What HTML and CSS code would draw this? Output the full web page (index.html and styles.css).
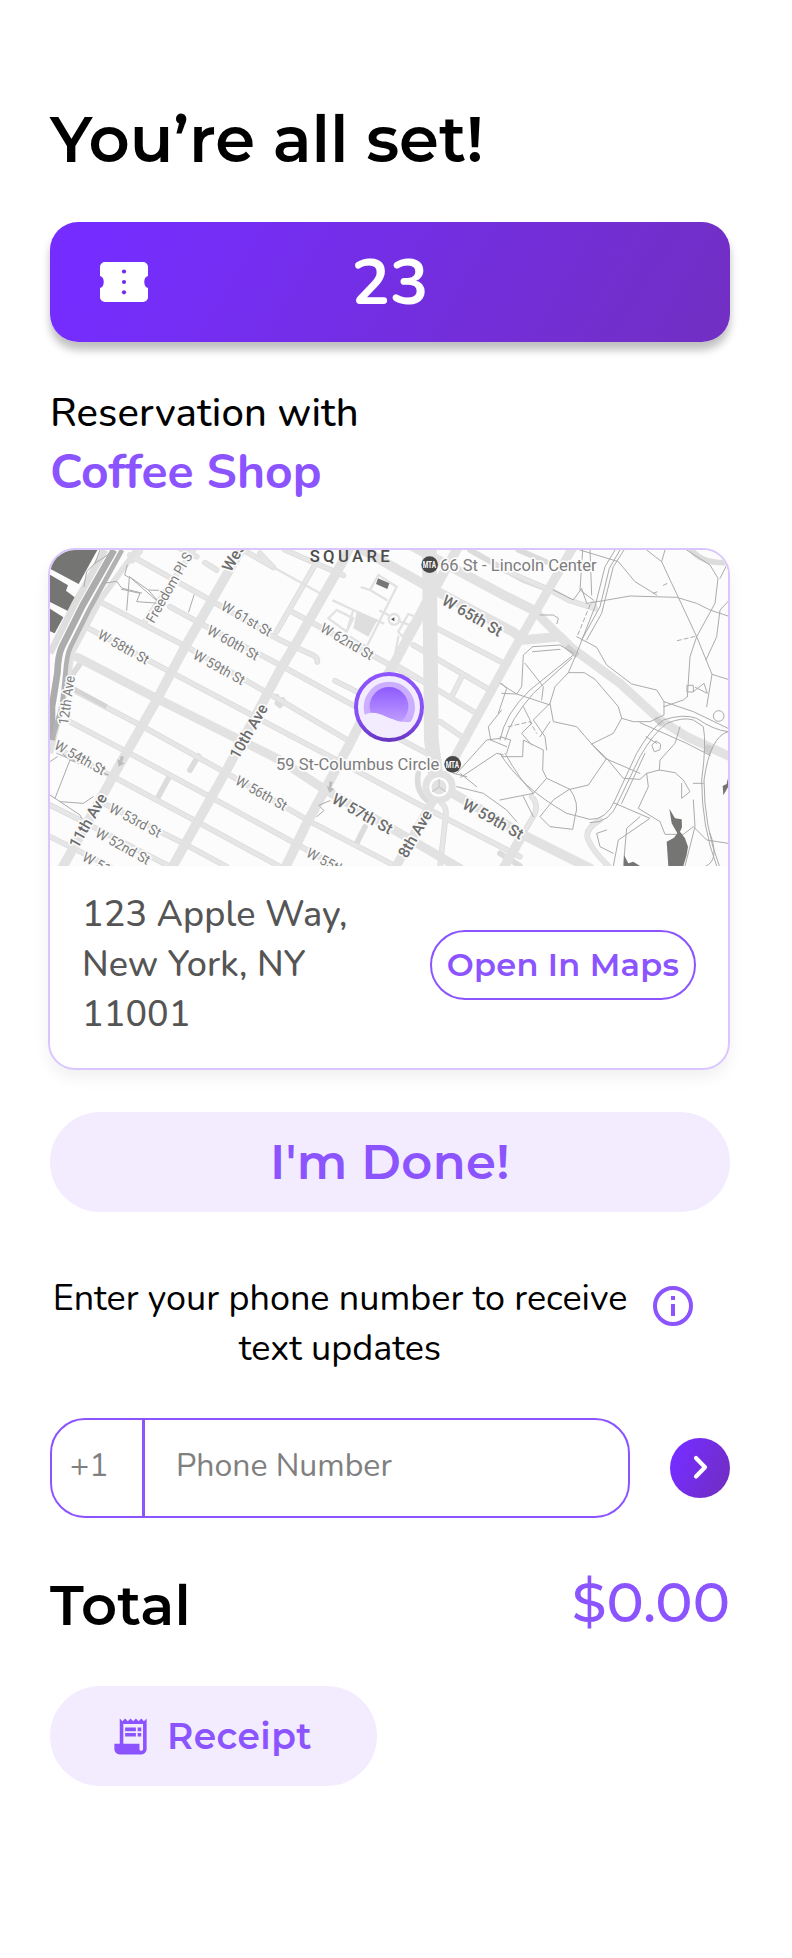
FILE: index.html
```html
<!DOCTYPE html>
<html lang="en">
<head>
<meta charset="utf-8">
<title>Reservation confirmed</title>
<link rel="stylesheet" href="styles.css">
</head>
<body>
<main class="page">
  <h1 class="title">You’re all set!</h1>

  <section class="ticket">
    <svg class="ticket-icon" viewBox="0 0 48 40" width="48" height="40">
      <path fill="#fff" d="M5 0H43a5 5 0 0 1 5 5V14a5 6.2 0 0 0 0 12V35a5 5 0 0 1-5 5H5a5 5 0 0 1-5-5V26a5 6.2 0 0 0 0-12V5a5 5 0 0 1 5-5z"/>
      <g fill="#742be9"><circle cx="24" cy="9.5" r="2.1"/><circle cx="24" cy="20" r="2.1"/><circle cx="24" cy="30.3" r="2.1"/></g>
    </svg>
    <span class="ticket-number">23</span>
  </section>

  <p class="with">Reservation with</p>
  <h2 class="shop">Coffee Shop</h2>

  <section class="place">
    <svg class="map" viewBox="30 30 2034 948" width="678" height="316">
      <defs>
        <linearGradient id="ring" x1="0" y1="0" x2="0" y2="1"><stop offset="0" stop-color="#8c55ff"/><stop offset=".65" stop-color="#8650f6"/><stop offset="1" stop-color="#6937c2"/></linearGradient>
        <linearGradient id="sun" x1="0" y1="0" x2="0" y2="1"><stop offset="0" stop-color="#8f5aff"/><stop offset="1" stop-color="#c4a4ff"/></linearGradient>
        <clipPath id="wave"><path d="M940 390H1160V545Q1130 548 1085 545C1045 538 1020 514 990 519Q980 520 972 526H940z"/></clipPath>
      </defs>
      <rect x="30" y="30" width="2034" height="948" fill="#fcfcfc"/>

      <!-- waterfront -->
      <g fill="#757574">
        <path d="M30 30H172L116 132L30 86z"/>
        <path d="M30 104L84 136L78 152L112 178L94 218L30 186z"/>
        <path d="M30 206L70 232L44 280L30 274z"/>
      </g>

      <!-- side streets -->
      <g class="street">
        <path d="M270 45L510 180L720 300L820 346q14 8 12 20M276 62L300 34M390 200L500 260L720 375L950 502M1080 598L1160 640M180 185L440 320L720 480L930 605"/>
        <path d="M145 265L390 395L720 570L890 660L1130 790L1440 950M110 455L310 560L560 700L820 850L1060 975M90 545L260 635L510 770L720 885L900 985"/>
        <path d="M40 620L220 710L480 850L720 980M190 790L430 910L560 980M30 795L120 840L400 985M30 890L130 940L210 980"/>
        <path d="M410 20L470 50M495 68L530 90M610 30L700 82M315 245L460 30M735 30L910 106M750 212L1060 380L1160 430M885 422L1000 480"/>
        <path d="M710 275L830 66M660 40L700 82M1190 265L1400 374M1120 315L1350 450M1080 382L1310 520M1200 545L1280 600M1265 410L1235 470M1170 690L1180 716"/>
        <path d="M450 690l25-42M355 770L390 706M100 400l24-34M710 470l10 26M950 910l25-50M712 490l16-10M1290 30L1450 120L1530 150"/>
        <path d="M1205 790q16 12 12 40L1200 980M1135 700q-10 50 25 80M1435 30L1520 66M1380 85L1530 150L1590 182L1665 206L1660 190M1380 940L1440 978"/>
        <path d="M1475 770q20 20 10 50L1450 880M1680 840q-50 30-35 60q15 35 60 78M1955 30q30 40 105 38"/>
      </g>
      <g class="street-fill">
        <path d="M270 45L510 180L720 300L820 346q14 8 12 20M276 62L300 34M390 200L500 260L720 375L950 502M1080 598L1160 640M180 185L440 320L720 480L930 605"/>
        <path d="M145 265L390 395L720 570L890 660L1130 790L1440 950M110 455L310 560L560 700L820 850L1060 975M90 545L260 635L510 770L720 885L900 985"/>
        <path d="M40 620L220 710L480 850L720 980M190 790L430 910L560 980M30 795L120 840L400 985M30 890L130 940L210 980"/>
        <path d="M410 20L470 50M495 68L530 90M610 30L700 82M315 245L460 30M735 30L910 106M750 212L1060 380L1160 430M885 422L1000 480"/>
        <path d="M710 275L830 66M660 40L700 82M1190 265L1400 374M1120 315L1350 450M1080 382L1310 520M1200 545L1280 600M1265 410L1235 470"/>
        <path d="M1205 790q16 12 12 40L1200 980M1475 770q20 20 10 50L1450 880M1680 840q-50 30-35 60q15 35 60 78M1380 85L1530 150L1590 182L1665 206L1660 190"/>
      </g>

      <!-- arts center plaza -->
      <g class="plaza">
        <path d="M1015 105L1070 140L980 320L930 290M1015 105L990 150L965 142M990 150L1040 180M880 182L940 210L1030 250M890 210L865 235L920 275L940 235zM940 210L920 275"/>
        <circle cx="1062" cy="238" r="16"/><path d="M1020 212L1045 225M1080 245l24 8M1105 222L1125 230L1088 290L1075 275zM1150 180L1065 345L1075 290M700 82L840 160"/>
      </g>
      <path d="M950 215L1012 240L985 290L940 265z" fill="#dedede"/>
      <path d="M1014 115L1048 130L1042 147L1008 132z" fill="#777"/>
      <path d="M1053 238l10-6v12z" fill="#555"/>

      <!-- main roads -->
      <g class="road">
        <path class="w26" d="M112 352L340 470L720 660L860 752L1080 880L1260 985"/>
        <path class="w28" d="M66 985L230 690L350 480L430 330L608 20"/>
        <path class="w28" d="M395 985L470 850L560 690L720 390L780 290L905 70L930 20"/>
        <path class="w28" d="M735 985L800 850L930 610L980 510L1060 375L1150 210L1210 100L1255 20"/>
        <path class="w26" d="M1065 985L1180 780M1235 670L1410 350L1490 210L1600 20"/>
        <path class="w28" d="M960 25L1150 132L1420 276L1450 300L1560 290L1590 320M1120 20L1400 170L1490 215"/>
        <path class="w44" d="M1168 25L1174 600L1190 720"/>
        <path class="w28" d="M1230 755L1410 860L1450 885L1650 985M1390 985L1450 880"/>
        <path class="w26" d="M1490 220L1590 320L1740 430L1860 540L1940 590L2070 650"/>
      </g>
      <circle cx="1197" cy="740" r="50" fill="#e2e2e2"/>
      <circle cx="1197" cy="741" r="26" fill="none" stroke="#fff" stroke-width="7"/>
      <path d="M1197 741v-24M1197 741l-20 14M1197 741l20 14" stroke="#c9c9c9" stroke-width="4"/>
      <path d="M1585 312l34 28-12 14-34-30zM1848 528l28 20-16 12-18-18zM2000 612l20 8-8 24-22-10z" fill="#cfcfcf"/>

      <!-- riverside highway -->
      <g fill="none">
        <path d="M290 30L180 180L95 340L80 440L30 640" stroke="#e2e2e2" stroke-width="18"/>
        <path d="M195 30L105 190L45 310L30 340" stroke="#dedede" stroke-width="20"/>
        <path d="M222 30L128 196L66 320Q54 345 52 400L36 500V600" stroke="#acacac" stroke-width="20"/>
        <path d="M246 30L150 204L92 320Q80 345 76 400L66 500L36 600" stroke="#b2b2b2" stroke-width="14"/>
        <path d="M100 446L200 500" stroke="#d4d4d4" stroke-width="14"/>
      </g>

      <!-- footpaths -->
      <g class="path">
        <path d="M180 30L165 70L140 95L132 140M165 70L210 40M262 75l-8 30l14 8l-8 98M190 130l40-6l15 20l60 15M268 110L365 195M268 110L325 150L385 152M325 150L360 190L290 185L300 160L245 148M462 165L446 216"/>
        <path d="M50 640L205 705L90 660L45 775M52 650L30 665M30 765L60 785L130 790L160 770M60 785L120 825L125 835M66 640L90 660"/>
        <path d="M1628 30L1620 150L1660 180M1650 30L1655 165M1620 30L1735 65L1785 125L1850 165M1725 30L1695 80L1665 200L1610 340L1585 398M1740 30L1708 85L1680 200L1625 300M1752 30L1720 80L1685 220L1640 300"/>
        <path d="M1540 150L1600 180L1625 145L1640 190L1690 182L1770 168L1910 172L1970 190L2010 210L2064 228M1820 30L1865 65L1895 130L1915 172L1970 290L2016 403L2064 418M1865 65L1875 30"/>
        <path d="M1940 30L2010 75L2034 115L2025 190L1970 290L1950 350L1942 470M2064 68L2040 115M2064 185L2040 210L2030 290L1998 360M2016 403L2000 500M1942 436h18v20h-18zM1960 455l32-25l10 30l-36-18"/>
        <path d="M1478 320L1450 345L1445 440L1430 462L1380 430M1478 320L1560 315L1600 340M1478 335L1560 328M1455 370L1510 440L1505 480M1380 600Q1395 520 1470 450L1600 345M1395 600Q1410 540 1480 460L1595 355M1585 398L1545 440L1530 490L1540 545L1610 560L1655 612L1695 655L1800 700M1585 398h48L1665 418L1735 500L1745 535L1720 580L1655 612"/>
        <path d="M1610 290L1670 322L1700 375L1775 432L1850 450L1872 485V525L1830 545H1780L1745 535M1872 485L1960 515L2064 565M1872 500L1930 480L1942 470M1800 548L1940 610L2010 646M1380 640Q1440 740 1580 820L1650 838Q1700 840 1725 780L1790 640Q1830 570 1870 540Q1930 520 1970 535Q2020 570 2064 575"/>
        <path d="M1395 640Q1440 720 1480 760M1650 848Q1710 850 1735 785L1800 650Q1840 580 1880 550Q1930 530 1960 540L1990 560Q2000 610 1985 720Q1985 860 2030 978M1745 790L1815 640M2064 575Q2010 590 1992 720Q1992 860 2038 978M1998 978Q2040 960 2010 880"/>
        <path d="M1655 612L1700 655L1645 735L1590 748L1520 715L1480 760L1380 780M1520 715L1508 690L1510 630L1450 600L1448 650H1385M1590 748Q1620 790 1605 830L1598 868L1530 860L1500 830L1540 780zM1700 655L1750 715L1800 718L1820 700L1858 690L1905 698L1930 720L1950 755L1925 775L1925 730"/>
        <path d="M1818 590L1850 610M1836 615l12-12l14 10l-2 16l-16 6zM1920 560L1905 610L1860 660L1858 690M1820 700L1825 740L1795 805L1860 845L1875 883H1930L1960 860L2000 900L2064 910M1720 788L1830 835L1735 900L1720 978M1800 830L1760 865L1750 978M1990 730h-30M1960 780L1965 860L1935 978M1400 640L1412 600L1380 590M1450 500L1475 550L1445 580L1475 615M1530 490L1480 540L1515 590L1520 630M1530 545L1500 590"/>
        <path d="M1385 460L1430 462L1530 495M1385 430L1400 445L1375 520M1352 600L1345 560L1385 510M1250 700L1340 600L1380 595M1262 712L1370 640L1390 645M1240 700l40 10M1352 600L1400 620M1250 740L1330 760L1400 810L1430 845M1260 700L1310 740M1480 830L1450 770M1500 225l40 0l15 10l-4 16M840 800l12 12l-22 18M836 796l34-14M1700 870l-30 10l10 40l40 20"/>
      </g>
      <path class="path" stroke-dasharray="12 9" d="M1650 195L1612 288M1912 302L1970 288M1405 560L1470 545L1490 580M1840 160l15-6M1870 136l12-6"/>

      <circle cx="2036" cy="528" r="16" fill="#fcfcfc" stroke="#ababab" stroke-width="3"/>
      <path fill="#757574" d="M1888 806L1905 835L1925 838L1926 862L1920 875L1935 895L1944 920L1940 945L1930 978H1885L1880 905L1902 893L1912 880L1895 850zM1752 945L1765 970L1780 965L1800 978H1752zM2048 738l16-8v12l-14 24zM2060 730l4-15v20z"/>

      <!-- one-way arrows -->
      <path fill="#bdbdbd" d="M242 648l10 2-6 16 8 4-18 10-4-22 8 3zM868 724l10 2-4 18 10 2-16 12-8-20 7 2z"/>

      <!-- street labels -->
      <g class="label">
        <text transform="translate(170 293) rotate(29)" textLength="168" lengthAdjust="spacingAndGlyphs">W 58th St</text>
        <text transform="translate(540 207) rotate(30)" textLength="168" lengthAdjust="spacingAndGlyphs">W 61st St</text>
        <text transform="translate(498 280) rotate(29)" textLength="170" lengthAdjust="spacingAndGlyphs">W 60th St</text>
        <text transform="translate(456 354) rotate(29)" textLength="170" lengthAdjust="spacingAndGlyphs">W 59th St</text>
        <text transform="translate(40 625) rotate(29)" textLength="168" lengthAdjust="spacingAndGlyphs">W 54th St</text>
        <text transform="translate(204 814) rotate(28)" textLength="170" lengthAdjust="spacingAndGlyphs">W 53rd St</text>
        <text transform="translate(163 888) rotate(29)" textLength="180" lengthAdjust="spacingAndGlyphs">W 52nd St</text>
        <text transform="translate(124 960) rotate(29)" textLength="90" lengthAdjust="spacingAndGlyphs">W 51</text>
        <text transform="translate(583 731) rotate(29)" textLength="170" lengthAdjust="spacingAndGlyphs">W 56th St</text>
        <text transform="translate(838 273) rotate(30)" textLength="176" lengthAdjust="spacingAndGlyphs">W 62nd St</text>
        <text transform="translate(796 948) rotate(28)" textLength="124" lengthAdjust="spacingAndGlyphs">W 55th</text>
        <text transform="translate(341 252) rotate(-60)" textLength="236" lengthAdjust="spacingAndGlyphs">Freedom Pl S</text>
        <text transform="translate(84 556) rotate(-82)" textLength="148" lengthAdjust="spacingAndGlyphs">12th Ave</text>
      </g>
      <g class="label major">
        <text transform="translate(1202 191) rotate(30)" textLength="200" lengthAdjust="spacingAndGlyphs">W 65th St</text>
        <text transform="translate(872 787) rotate(29)" textLength="200" lengthAdjust="spacingAndGlyphs">W 57th St</text>
        <text transform="translate(1264 803) rotate(29)" textLength="200" lengthAdjust="spacingAndGlyphs">W 59th St</text>
        <text transform="translate(113 928) rotate(-60)" textLength="180" lengthAdjust="spacingAndGlyphs">11th Ave</text>
        <text transform="translate(595 660) rotate(-60)" textLength="180" lengthAdjust="spacingAndGlyphs">10th Ave</text>
        <text transform="translate(1100 957) rotate(-60)" textLength="156" lengthAdjust="spacingAndGlyphs">8th Ave</text>
        <text transform="translate(572 98) rotate(-60)">Wes</text>
      </g>
      <text class="area" x="809" y="65" textLength="240">SQUARE</text>
      <g class="station">
        <text x="1200" y="93" textLength="470" lengthAdjust="spacingAndGlyphs">66 St - Lincoln Center</text>
        <text x="708" y="691" textLength="490" lengthAdjust="spacingAndGlyphs">59 St-Columbus Circle</text>
      </g>
      <g class="mta">
        <circle cx="1169" cy="74" r="25"/><circle cx="1238" cy="673" r="25"/>
        <text x="1148" y="84" textLength="40" lengthAdjust="spacingAndGlyphs">MTA</text>
        <text x="1217" y="683" textLength="40" lengthAdjust="spacingAndGlyphs">MTA</text>
      </g>

      <!-- shop pin -->
      <circle cx="1047" cy="501" r="99" fill="#f3ecff" stroke="url(#ring)" stroke-width="12"/>
      <g clip-path="url(#wave)">
        <circle cx="1048" cy="502" r="77" fill="#cbaeff"/>
        <circle cx="1047" cy="499" r="58" fill="url(#sun)"/>
      </g>
    </svg>
    <div class="place-info">
      <address class="address">123 Apple Way,<br>New York, NY<br>11001</address>
      <a class="maps-button">Open In Maps</a>
    </div>
  </section>

  <button class="done">I'm Done!</button>

  <div class="prompt">
    <p class="prompt-text">Enter your phone number to receive text updates</p>
    <svg class="info" viewBox="0 0 40 40" width="40" height="40">
      <circle cx="20" cy="20" r="18" fill="none" stroke="#8b54ff" stroke-width="4"/>
      <path fill="#8b54ff" d="M18 10h4v4h-4zM18 18h4v12h-4z"/>
    </svg>
  </div>

  <div class="phone">
    <div class="field">
      <span class="code">+1</span>
      <span class="number">Phone Number</span>
    </div>
    <button class="send" aria-label="Send">
      <svg viewBox="0 0 60 60" width="60" height="60"><path d="M26 20L35 29.3L26 38.5" fill="none" stroke="#fff" stroke-width="4.2" stroke-linecap="round" stroke-linejoin="round"/></svg>
    </button>
  </div>

  <div class="total">
    <span class="total-label">Total</span>
    <span class="amount">$0.00</span>
  </div>

  <button class="receipt">
    <svg class="receipt-icon" viewBox="0 0 24 24" width="43" height="43" fill="#8b54ff">
      <path d="M19.5 3.5L18 2l-1.5 1.5L15 2l-1.5 1.5L12 2l-1.5 1.5L9 2 7.5 3.5 6 2v14H3v3c0 1.66 1.34 3 3 3h12c1.66 0 3-1.34 3-3V2l-1.5 1.5zM19 19c0 .55-.45 1-1 1s-1-.45-1-1v-3H8V5h11v14z"/>
      <path d="M9 7h6v2H9zM16 7h2v2h-2zM9 10h6v2H9zM16 10h2v2h-2z"/>
    </svg>
    Receipt
  </button>
</main>
</body>
</html>
```
FILE: styles.css
```css
* { box-sizing: border-box; }

body {
  margin: 0;
  background: #fff;
  color: #000;
  font-family: "Nunito", "Noto Sans", sans-serif;
}

h1, h2, p { margin: 0; }

button {
  border: 0;
  padding: 0;
  background: none;
}

.page {
  width: 792px;
  height: 1958px;
  padding: 100px 62px 0 50px;
  overflow: hidden;
}

.title, .maps-button, .done, .total, .receipt {
  font-family: "Montserrat", "Inter", sans-serif;
  font-weight: 600;
  white-space: nowrap;
}

.title { height: 78px; line-height: 78px; font-size: 64px; }

.ticket {
  display: grid;
  grid-template-columns: 48px 1fr 48px;
  align-items: center;
  height: 120px;
  margin-top: 44px;
  padding: 0 50px;
  border-radius: 28px;
  background: linear-gradient(120deg, #752dff 8%, #722fc3 98%);
  box-shadow: 0 8px 8px rgba(0, 0, 0, .25);
}
.ticket-number {
  color: #fff;
  font-size: 64px;
  font-weight: 700;
  line-height: 80px;
  text-align: center;
  margin-top: 2px;
}

.with {
  margin-top: 44px;
  font-size: 40px;
  font-weight: 500;
  line-height: 54px;
  letter-spacing: .15px;
}
.shop {
  color: #8b54ff;
  font-size: 48px;
  font-weight: 700;
  line-height: 65px;
}

.place {
  width: 682px;
  height: 522px;
  margin: 43px 0 0 -2px;
  border: 2px solid #d9c6ff;
  border-radius: 27px;
  overflow: hidden;
  box-shadow: 0 8px 16px rgba(0, 0, 0, .06);
}
.map { display: block; font-family: "Roboto", sans-serif; }

.street, .street-fill, .plaza, .road, .path { fill: none; stroke-linejoin: round; stroke-linecap: round; }
.street { stroke: #dcdcdc; stroke-width: 17; }
.street-fill { stroke: #e6e6e6; stroke-width: 12; }
.plaza { stroke: #e2e2e2; stroke-width: 7; }
.road { stroke: #e2e2e2; }
.w26 { stroke-width: 27; }
.w28 { stroke-width: 29; }
.w44 { stroke-width: 44; }
.path { stroke: #ababab; stroke-width: 3; }

.label { fill: #7c7c7c; font-size: 42px; stroke: #fbfbfb; stroke-width: 10; paint-order: stroke; stroke-linejoin: round; }
.major { fill: #6c6c6c; font-size: 47px; font-weight: 500; }
.area { fill: #4b4b4b; font-size: 50px; font-weight: 500; }
.station { fill: #7c7c7c; font-size: 50px; stroke: #fcfcfc; stroke-width: 10; paint-order: stroke; stroke-linejoin: round; }
.mta { fill: #484848; }
.mta text { fill: #fff; font-size: 29px; font-weight: 700; }

.place-info {
  display: flex;
  justify-content: space-between;
  padding: 24px 32px 0;
}
.address {
  color: #555;
  font-size: 36px;
  font-style: normal;
  font-weight: 500;
  line-height: 50px;
  letter-spacing: .1px;
}
.maps-button {
  display: flex;
  align-items: center;
  justify-content: center;
  width: 266px;
  height: 70px;
  margin-top: 40px;
  padding-bottom: 2px;
  border: 2px solid #8b54ff;
  border-radius: 35px;
  color: #8b54ff;
  font-size: 32px;
  letter-spacing: .3px;
}

.done {
  display: flex;
  align-items: center;
  justify-content: center;
  width: 680px;
  height: 100px;
  margin-top: 42px;
  border-radius: 50px;
  background: #f3ecff;
  color: #8b54ff;
  font-size: 48px;
  letter-spacing: .4px;
}

.prompt {
  display: flex;
  gap: 23px;
  margin-top: 62px;
}
.prompt-text {
  width: 580px;
  font-size: 36px;
  line-height: 50px;
  text-align: center;
}
.info { margin-top: 12px; }

.phone {
  display: flex;
  align-items: center;
  justify-content: space-between;
  margin-top: 44px;
}
.field {
  display: flex;
  width: 580px;
  height: 100px;
  border: 2px solid #8b54ff;
  border-radius: 35px;
  color: #808080;
  font-size: 32px;
  line-height: 91px;
}
.code {
  width: 93px;
  padding-left: 18px;
  border-right: 3px solid #8b54ff;
}
.number { padding-left: 31px; }
.send {
  width: 60px;
  height: 60px;
  border-radius: 50%;
  background: linear-gradient(115deg, #752dff 15%, #712dc0 95%);
}
.send svg { display: block; }

.total {
  display: flex;
  justify-content: space-between;
  height: 70px;
  margin-top: 52px;
  line-height: 70px;
  font-size: 56px;
}
.total-label { letter-spacing: .3px; }
.amount {
  margin-top: -3px;
  color: #8b54ff;
  font-weight: 500;
}

.receipt {
  display: flex;
  align-items: center;
  gap: 15.5px;
  width: 327px;
  height: 100px;
  margin-top: 46px;
  padding-left: 58.5px;
  border-radius: 50px;
  background: #f3ecff;
  color: #8b54ff;
  font-size: 36px;
  letter-spacing: .4px;
}
```
